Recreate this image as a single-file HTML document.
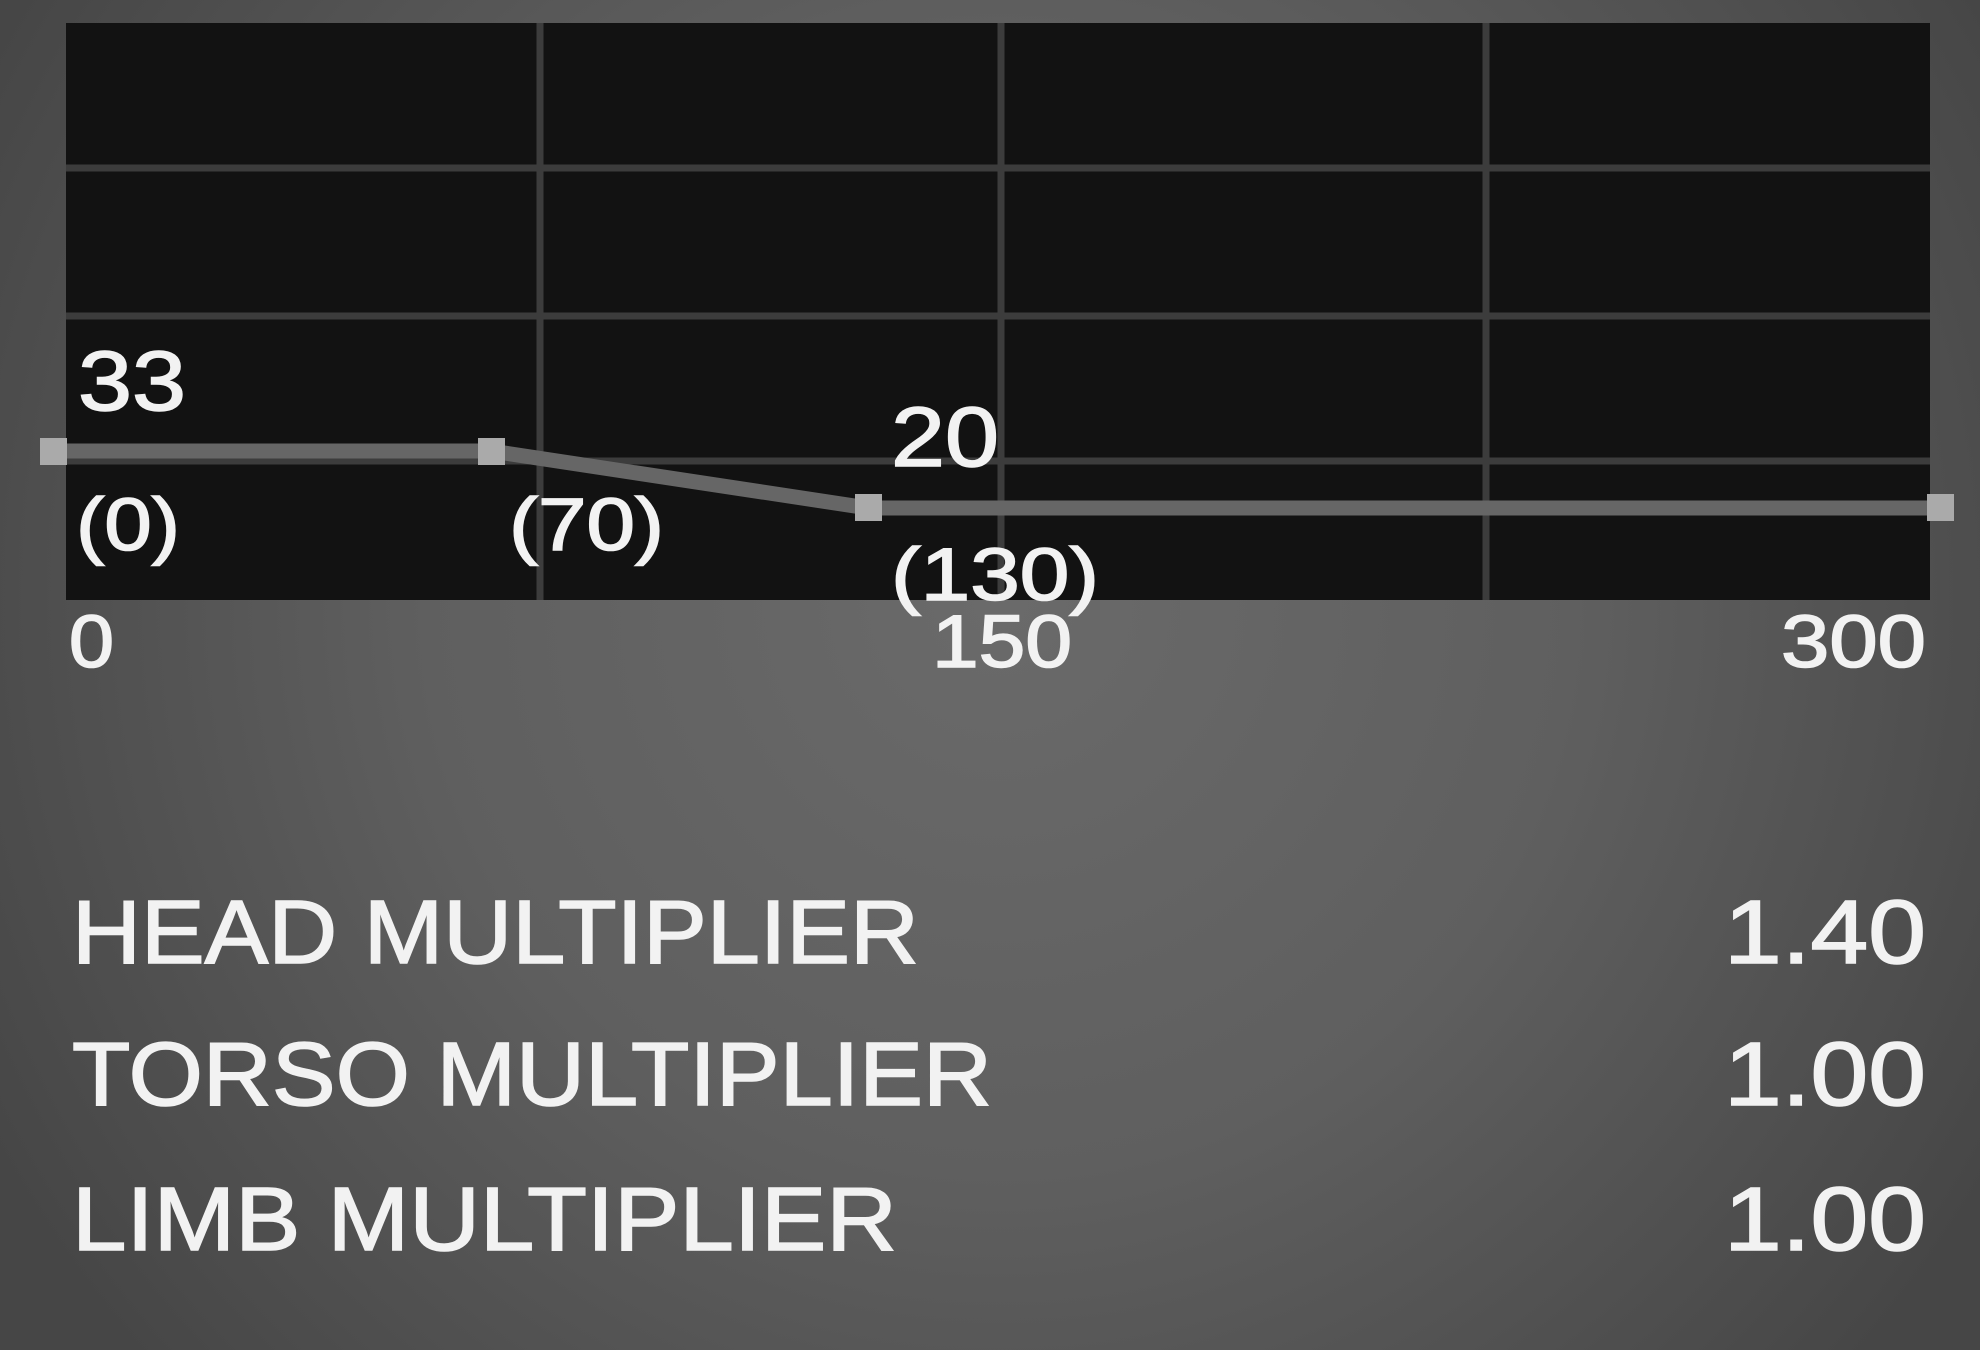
<!DOCTYPE html>
<html><head><meta charset="utf-8"><style>
html,body{margin:0;padding:0;width:1980px;height:1350px;overflow:hidden;background:#5a5a5a}
svg{display:block}
text{font-family:"Liberation Sans",sans-serif;fill:#f2f2f2;stroke:#f2f2f2;stroke-width:1.6}
</style></head><body>
<svg width="1980" height="1350" viewBox="0 0 1980 1350" xmlns="http://www.w3.org/2000/svg">
<defs>
<radialGradient id="bg" cx="1000" cy="600" r="1150" gradientUnits="userSpaceOnUse">
<stop offset="0" stop-color="#6a6a6a"/>
<stop offset="0.5" stop-color="#5f5f5f"/>
<stop offset="1" stop-color="#464646"/>
</radialGradient>
</defs>
<rect width="1980" height="1350" fill="url(#bg)"/>
<rect x="66" y="23" width="1864" height="577" fill="#121212"/>
<g stroke="#3c3c3c" stroke-width="7">
<line x1="540" y1="23" x2="540" y2="600"/>
<line x1="1001" y1="23" x2="1001" y2="600"/>
<line x1="1486" y1="23" x2="1486" y2="600"/>
<line x1="66" y1="168" x2="1930" y2="168"/>
<line x1="66" y1="316" x2="1930" y2="316"/>
<line x1="66" y1="461" x2="1930" y2="461"/>
</g>
<polyline points="53,451 491,451 868,508 1941,508" fill="none" stroke="#666" stroke-width="15"/>
<g fill="#aaa">
<rect x="40" y="438" width="27" height="27"/>
<rect x="478" y="438" width="27" height="27"/>
<rect x="855" y="494" width="27" height="27"/>
<rect x="1927" y="494" width="27" height="27"/>
</g>
<g font-size="84">
<text x="78" y="410" textLength="108" lengthAdjust="spacingAndGlyphs">33</text>
<text x="891" y="466" textLength="108" lengthAdjust="spacingAndGlyphs">20</text>
</g>
<g font-size="74">
<text x="76" y="550" textLength="104" lengthAdjust="spacingAndGlyphs">(0)</text>
<text x="509" y="550" textLength="155" lengthAdjust="spacingAndGlyphs">(70)</text>
<text x="891" y="600" textLength="208" lengthAdjust="spacingAndGlyphs">(130)</text>
<text x="69" y="667" textLength="45" lengthAdjust="spacingAndGlyphs">0</text>
<text x="932" y="667" textLength="140" lengthAdjust="spacingAndGlyphs">150</text>
<text x="1781" y="667" textLength="145" lengthAdjust="spacingAndGlyphs">300</text>
</g>
<g font-size="90">
<text x="72" y="963" textLength="847" lengthAdjust="spacingAndGlyphs">HEAD MULTIPLIER</text>
<text x="72" y="1105" textLength="920" lengthAdjust="spacingAndGlyphs">TORSO MULTIPLIER</text>
<text x="72" y="1250" textLength="825" lengthAdjust="spacingAndGlyphs">LIMB MULTIPLIER</text>
<text x="1724" y="963" textLength="202" lengthAdjust="spacingAndGlyphs">1.40</text>
<text x="1724" y="1105" textLength="202" lengthAdjust="spacingAndGlyphs">1.00</text>
<text x="1724" y="1250" textLength="202" lengthAdjust="spacingAndGlyphs">1.00</text>
</g>
</svg>
</body></html>
